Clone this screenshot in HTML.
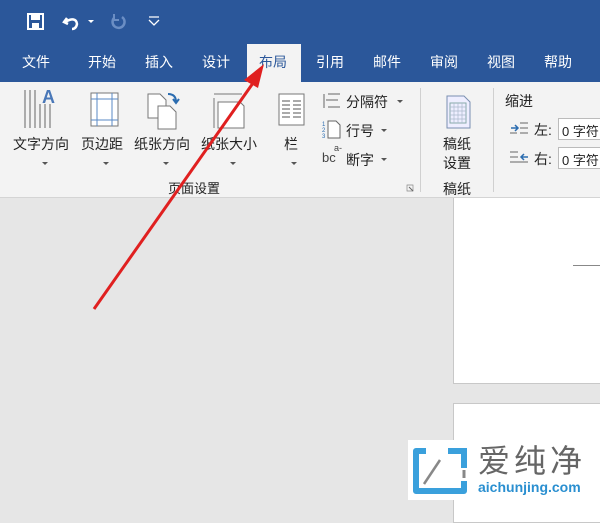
<!DOCTYPE html>
<html><head><meta charset="utf-8"><style>
*{margin:0;padding:0;box-sizing:border-box}
body{width:600px;height:500px;overflow:hidden;position:relative;background:#e6e6e6;font-family:"Liberation Sans","Noto Sans CJK SC",sans-serif;}
.top{position:absolute;left:0;top:0;width:600px;height:82px;background:#2b579a}
.tab{position:absolute;top:52px;color:#fff;font-size:14px}
.act{position:absolute;left:247px;top:44px;width:54px;height:38px;background:#f3f3f3}
.rib{position:absolute;left:0;top:82px;width:600px;height:116px;background:#f3f3f3;border-bottom:1px solid #d4d4d4}
.t{position:absolute;font-size:14px;color:#222;white-space:nowrap}
.dd{position:absolute;width:0;height:0;border-left:3px solid transparent;border-right:3px solid transparent;border-top:3px solid #555}
.sep{position:absolute;top:88px;width:1px;height:104px;background:#d0d0d0}
.page{position:absolute;background:#fff;border:1px solid #c8c8c8}
.box{position:absolute;left:558px;width:50px;height:22px;background:#fff;border:1px solid #bbb;font-size:13px;padding:2px 3px;color:#222}
</style></head><body>
<div class="top"></div>
<svg style="position:absolute;left:26px;top:12px" width="20" height="20"><rect x="2" y="2" width="15" height="15" fill="none" stroke="#fff" stroke-width="2"/><rect x="5" y="3" width="9" height="5" fill="#fff"/><rect x="6" y="11" width="7" height="5" fill="#fff"/></svg>
<svg style="position:absolute;left:62px;top:12px" width="36" height="20"><path d="M5 6 L2 10 L6 12 M3 10 Q14 4 15 12 Q14 17 10 17" fill="none" stroke="#fff" stroke-width="2.5"/><path d="M26 8 L32 8 L29 11Z" fill="#fff"/></svg>
<svg style="position:absolute;left:108px;top:12px" width="20" height="20"><path d="M14 5 A6 6 0 1 1 6 6" fill="none" stroke="#6b8ec4" stroke-width="2.5"/><path d="M6 2 L6 8 L11 8" fill="none" stroke="#6b8ec4" stroke-width="2"/></svg>
<svg style="position:absolute;left:148px;top:16px" width="12" height="10"><path d="M1 1 H11 M1 4 L6 9 L11 4" fill="none" stroke="#fff" stroke-width="1.3"/></svg>
<div class="act"></div>
<div class="tab" style="left:22px">文件</div>
<div class="tab" style="left:88px">开始</div>
<div class="tab" style="left:145px">插入</div>
<div class="tab" style="left:202px">设计</div>
<div class="tab" style="left:259px;color:#2b579a">布局</div>
<div class="tab" style="left:316px">引用</div>
<div class="tab" style="left:373px">邮件</div>
<div class="tab" style="left:430px">审阅</div>
<div class="tab" style="left:487px">视图</div>
<div class="tab" style="left:544px">帮助</div>
<div class="rib"></div>
<!-- icons -->
<svg style="position:absolute;left:22px;top:88px" width="42" height="42"><g stroke="#666" stroke-width="1"><path d="M3 2V40M8 2V40M13 2V40M18 16V40M23 16V40M28 16V40"/></g><text x="20" y="15" font-size="18" font-weight="bold" fill="#4a78b8" font-family="Liberation Sans">A</text></svg>
<svg style="position:absolute;left:90px;top:92px" width="30" height="36"><rect x="1" y="1" width="27" height="33" fill="#fff" stroke="#777"/><path d="M7 1V34M22 1V34M1 7H28M1 28H28" stroke="#5a8ac6"/></svg>
<svg style="position:absolute;left:146px;top:90px" width="40" height="40"><path d="M2 4H14L20 10V28H2Z" fill="#fff" stroke="#777"/><path d="M12 16H24L30 22V39H12Z" fill="#fff" stroke="#777"/><path d="M22 4Q30 4 30 12M27 9L30 13L33 9" fill="none" stroke="#2b6cb0" stroke-width="2"/></svg>
<svg style="position:absolute;left:212px;top:90px" width="36" height="40"><path d="M6 12H28L32 16V38H6Z" fill="#fff" stroke="#777"/><path d="M2 8V38M2 4H30" stroke="#777"/></svg>
<svg style="position:absolute;left:278px;top:93px" width="28" height="34"><rect x="1" y="1" width="25" height="31" fill="#fff" stroke="#777"/><path d="M4 8H12M15 8H23M4 12H12M15 12H23M4 16H12M15 16H23M4 20H12M15 20H23M4 24H12M15 24H23" stroke="#555"/></svg>
<div class="t" style="left:13px;top:134px">文字方向</div>
<div class="t" style="left:81px;top:134px">页边距</div>
<div class="t" style="left:134px;top:134px">纸张方向</div>
<div class="t" style="left:201px;top:134px">纸张大小</div>
<div class="t" style="left:284px;top:134px">栏</div>
<div class="dd" style="left:42px;top:162px"></div><div class="dd" style="left:103px;top:162px"></div><div class="dd" style="left:163px;top:162px"></div><div class="dd" style="left:230px;top:162px"></div><div class="dd" style="left:291px;top:162px"></div>
<div class="t" style="left:168px;top:178px;font-size:13px">页面设置</div>
<svg style="position:absolute;left:322px;top:92px" width="20" height="18"><path d="M2 2V16M6 2H18M6 15H18M4 8H16" stroke="#666"/></svg>
<div class="t" style="left:346px;top:92px">分隔符</div><div class="dd" style="left:397px;top:100px"></div>
<svg style="position:absolute;left:322px;top:119px" width="20" height="20"><text x="0" y="7" font-size="6" fill="#2b6cb0">1</text><text x="0" y="13" font-size="6" fill="#2b6cb0">2</text><text x="0" y="19" font-size="6" fill="#2b6cb0">3</text><path d="M6 2H14L18 6V19H6Z" fill="#fff" stroke="#666"/></svg>
<div class="t" style="left:346px;top:121px">行号</div><div class="dd" style="left:381px;top:129px"></div>
<div class="t" style="left:322px;top:150px;font-size:13px;color:#444">b<sub style="font-size:9px"></sub>c</div>
<div class="t" style="left:334px;top:143px;font-size:9px;color:#444">a-</div>
<div class="t" style="left:346px;top:150px">断字</div><div class="dd" style="left:381px;top:158px"></div>
<svg style="position:absolute;left:406px;top:184px" width="8" height="8"><path d="M1 1H7V7H1Z" fill="none" stroke="#888" stroke-width=".7"/><path d="M3 3L7 7" stroke="#666"/></svg>
<div class="sep" style="left:420px"></div>
<svg style="position:absolute;left:446px;top:95px" width="26" height="34"><path d="M1 1H18L24 7V33H1Z" fill="#eef" stroke="#7a8fb0"/><g fill="#9ab"><rect x="4" y="8" width="16" height="20" fill="none" stroke="#8aa"/></g><path d="M4 12H20M4 16H20M4 20H20M4 24H20M8 8V28M12 8V28M16 8V28" stroke="#aab8cc" stroke-width=".7"/></svg>
<div class="t" style="left:443px;top:134px">稿纸</div>
<div class="t" style="left:443px;top:153px">设置</div>
<div class="t" style="left:443px;top:179px">稿纸</div>
<div class="sep" style="left:493px"></div>
<div class="t" style="left:505px;top:91px">缩进</div>
<svg style="position:absolute;left:509px;top:121px" width="20" height="14"><path d="M2 7H8M6 4L9 7L6 10" stroke="#2b6cb0" stroke-width="1.5" fill="none"/><path d="M11 2H19M11 7H19M11 12H19M1 12H8" stroke="#666"/></svg>
<div class="t" style="left:534px;top:120px">左:</div>
<div class="box" style="top:118px">0 字符</div>
<svg style="position:absolute;left:509px;top:150px" width="20" height="14"><path d="M19 7H13M15 4L12 7L15 10" stroke="#2b6cb0" stroke-width="1.5" fill="none"/><path d="M1 2H9M1 7H9M1 12H19" stroke="#666"/></svg>
<div class="t" style="left:534px;top:149px">右:</div>
<div class="box" style="top:147px">0 字符</div>
<!-- document -->
<div class="page" style="left:453px;top:198px;width:160px;height:186px;border-top:none"></div>
<div style="position:absolute;left:573px;top:265px;width:30px;height:1px;background:#888"></div>
<div class="page" style="left:453px;top:403px;width:160px;height:120px"></div>
<!-- watermark -->
<div style="position:absolute;left:408px;top:440px;width:192px;height:60px;background:#fff"></div>
<svg style="position:absolute;left:412px;top:448px" width="56" height="46"><path d="M14 3H4V43H52V33" fill="none" stroke="#3aa0dc" stroke-width="6" stroke-linejoin="round"/><path d="M36 3H52V20" fill="none" stroke="#3aa0dc" stroke-width="6"/><path d="M12 36L28 12" stroke="#888" stroke-width="2.5"/><path d="M52 22V30" stroke="#888" stroke-width="3"/></svg>
<div class="t" style="left:478px;top:443px;font-size:32px;color:#666;letter-spacing:4px;line-height:36px">爱纯净</div>
<div class="t" style="left:478px;top:479px;font-size:14px;color:#2a8fd0;font-weight:bold">aichunjing.com</div>
<!-- arrow -->
<svg style="position:absolute;left:0;top:0" width="600" height="500"><path d="M94 309 L258 76" stroke="#e02020" stroke-width="3"/><path d="M264 64 L244 80 L258 88 Z" fill="#e02020"/></svg>
</body></html>
